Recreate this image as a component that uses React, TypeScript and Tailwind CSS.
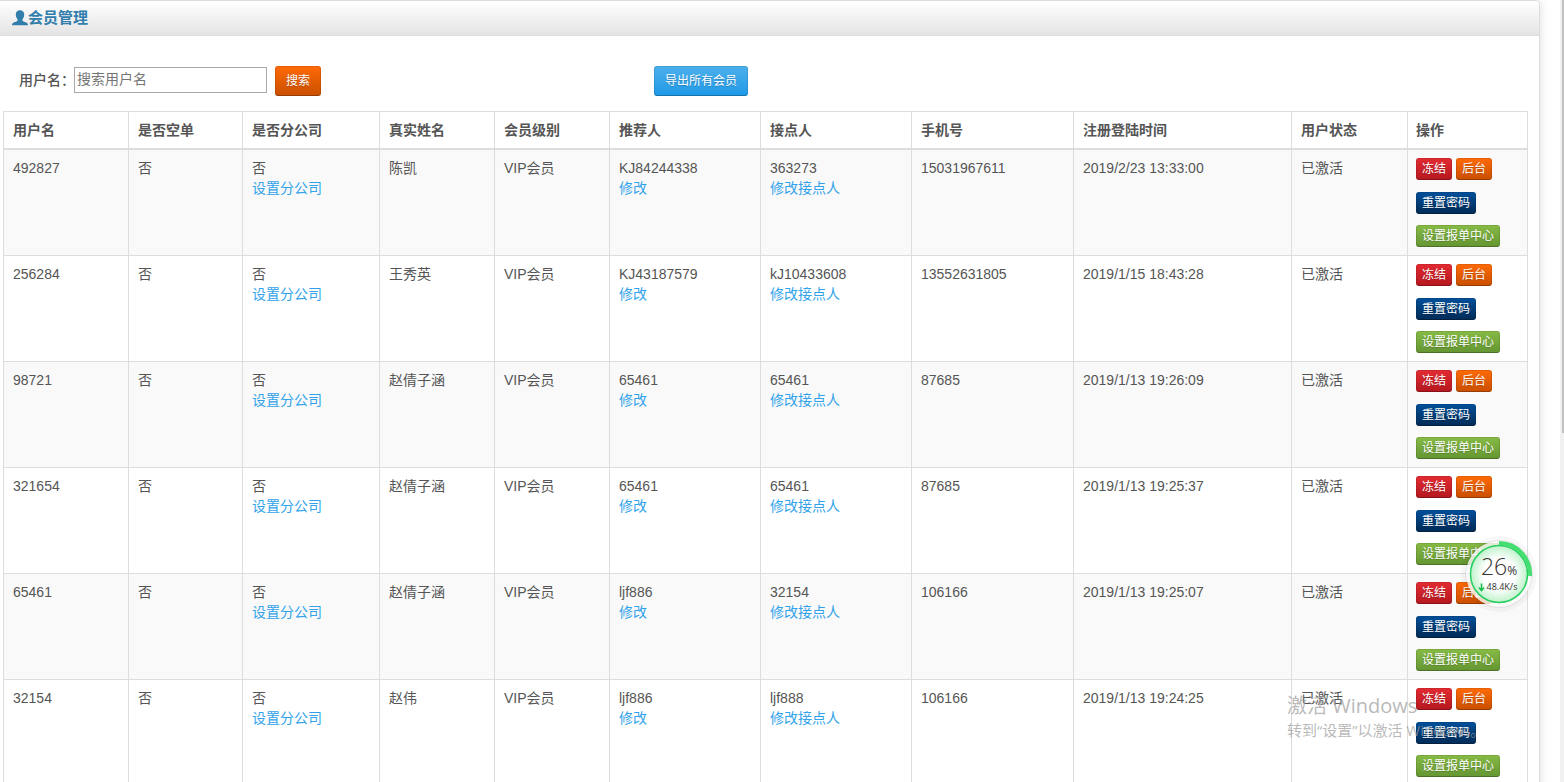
const members = [
  { id: "492827", name: "陈凯", referrer: "KJ84244338", node: "363273", phone: "15031967611", time: "2019/2/23 13:33:00" },
  { id: "256284", name: "王秀英", referrer: "KJ43187579", node: "kJ10433608", phone: "13552631805", time: "2019/1/15 18:43:28" },
  { id: "98721", name: "赵倩子涵", referrer: "65461", node: "65461", phone: "87685", time: "2019/1/13 19:26:09" },
  { id: "321654", name: "赵倩子涵", referrer: "65461", node: "65461", phone: "87685", time: "2019/1/13 19:25:37" },
  { id: "65461", name: "赵倩子涵", referrer: "ljf886", node: "32154", phone: "106166", time: "2019/1/13 19:25:07" },
  { id: "32154", name: "赵伟", referrer: "ljf886", node: "ljf888", phone: "106166", time: "2019/1/13 19:24:25" },
];

const columns = [
  { title: "用户名", width: "w-[125px]" },
  { title: "是否空单", width: "w-[114px]" },
  { title: "是否分公司", width: "w-[137px]" },
  { title: "真实姓名", width: "w-[115px]" },
  { title: "会员级别", width: "w-[115px]" },
  { title: "推荐人", width: "w-[151px]" },
  { title: "接点人", width: "w-[151px]" },
  { title: "手机号", width: "w-[162px]" },
  { title: "注册登陆时间", width: "w-[218px]" },
  { title: "用户状态", width: "w-[116px]" },
  { title: "操作", width: "w-[120px]" },
];

const frame = "border-b border-r border-[#ddd] py-2 pr-2 align-top";
const cell = `${frame} pl-[9px]`;
const button =
  "rounded-[3px] border border-black/10 border-b-black/25 bg-gradient-to-b bg-origin-border text-xs text-white [text-shadow:0_1px_1px_rgba(0,0,0,0.2)]";
const small = "h-[22px] px-[5px] leading-5";
const red = "from-[#e32b32] to-[#b5171f]";
const orange = "from-[#ff6a08] to-[#c94f00]";
const navy = "from-[#00509c] to-[#002b55]";
const green = "from-[#87bb45] to-[#649532]";
const blue = "from-[#4bb0ec] to-[#1b99e6]";

function TextLink({ children }: { children: string }) {
  return (
    <a href="#" className="block w-fit text-[#32a3ea]">
      {children}
    </a>
  );
}

function Toolbar() {
  return (
    <form className="flex h-[75px] items-start pl-[19px] pt-[30px]" onSubmit={(e) => e.preventDefault()}>
      <div className="flex w-[635px] items-start">
        <label htmlFor="username" className="w-[55px] whitespace-nowrap font-medium leading-7">
          用户名：
        </label>
        <input
          id="username"
          type="text"
          placeholder="搜索用户名"
          className="mt-px h-[26px] w-[193px] border border-[#a9a9a9] bg-white px-0.5 pb-0.5 placeholder:text-[#757575]"
        />
        <button type="submit" className={`${button} ${orange} ml-2 h-[30px] px-2.5`}>
          搜索
        </button>
      </div>
      <button type="button" className={`${button} ${blue} h-[30px] px-2.5`}>
        导出所有会员
      </button>
    </form>
  );
}

function MemberTable() {
  return (
    <table className="w-full table-fixed border-separate border-spacing-0 border-l border-t border-[#ddd]">
      <thead>
        <tr>
          {columns.map((c) => (
            <th
              key={c.title}
              scope="col"
              className={`${c.width} border-b-2 border-r border-[#ddd] py-2 pl-[9px] pr-2 text-left font-bold last:pl-2`}
            >
              {c.title}
            </th>
          ))}
        </tr>
      </thead>
      <tbody>
        {members.map((m) => (
          <tr key={m.id} className="h-[106px] odd:bg-[#f9f9f9]">
            <td className={cell}>{m.id}</td>
            <td className={cell}>否</td>
            <td className={cell}>
              否<TextLink>设置分公司</TextLink>
            </td>
            <td className={cell}>{m.name}</td>
            <td className={cell}>VIP会员</td>
            <td className={cell}>
              {m.referrer}
              <TextLink>修改</TextLink>
            </td>
            <td className={cell}>
              {m.node}
              <TextLink>修改接点人</TextLink>
            </td>
            <td className={cell}>{m.phone}</td>
            <td className={cell}>{m.time}</td>
            <td className={cell}>已激活</td>
            <td className={`${frame} pl-2`}>
              <div className="flex flex-col items-start gap-3">
                <div className="flex gap-1">
                  <button type="button" className={`${button} ${small} ${red}`}>冻结</button>
                  <button type="button" className={`${button} ${small} ${orange}`}>后台</button>
                </div>
                <button type="button" className={`${button} ${small} ${navy}`}>重置密码</button>
                <button type="button" className={`${button} ${small} ${green} -mt-px`}>设置报单中心</button>
              </div>
            </td>
          </tr>
        ))}
      </tbody>
    </table>
  );
}

function SpeedBall() {
  return (
    <div className="pointer-events-none absolute right-[25px] top-[534px] size-20">
      <svg viewBox="0 0 80 80" className="absolute inset-0 size-20" aria-hidden="true">
        <defs>
          <radialGradient id="ball">
            <stop offset="0.55" stopColor="#fff" />
            <stop offset="1" stopColor="#bff2cb" />
          </radialGradient>
        </defs>
        <circle cx="40" cy="40" r="38" fill="#000" fillOpacity="0.03" />
        <circle cx="40" cy="40" r="34" fill="#000" fillOpacity="0.07" />
        <circle cx="40" cy="40" r="33" fill="#fff" fillOpacity="0.8" />
        <circle cx="40" cy="40" r="28.5" fill="url(#ball)" stroke="#23cf5f" strokeWidth="1.5" />
        <path d="M40 9 A31 31 0 0 1 71 42" fill="none" stroke="#45de70" strokeWidth="4" />
        <path d="M22.500 49.500v7M20 53.500L22.500 56.500l2.500-3" fill="none" stroke="#16bd4b" strokeWidth="1.500" />
      </svg>
      <div className="relative flex flex-col items-center pt-5 font-['Open_Sans',sans-serif] text-[#333]">
        <div className="flex items-baseline font-light leading-6">
          <span className="text-[23px]">26</span>
          <span className="text-xs font-normal">%</span>
        </div>
        <div className="pl-1.5 text-[9px] font-medium leading-4">48.4K/s</div>
      </div>
    </div>
  );
}

function Watermark() {
  return (
    <div className="pointer-events-none absolute left-[1287px] top-[694px] whitespace-nowrap font-['Open_Sans','Noto_Sans_CJK_SC',sans-serif] text-[#9a9a9a]/70">
      <div className="text-xl leading-6">激活 Windows</div>
      <div className="text-[15px] leading-6">转到“设置”以激活 Windows。</div>
    </div>
  );
}

export default function App() {
  return (
    <div className="relative flex h-screen overflow-hidden bg-white font-['Liberation_Sans','Noto_Sans_CJK_SC',sans-serif] text-sm leading-5 text-[#555]">
      <main className="mr-5 flex-1 self-start rounded-tr-[5px] border-r border-t border-[#ddd] pb-10 shadow-[0_0_10px_#ddd]">
        <header className="flex h-[35px] items-center rounded-tr border-b border-[#ddd] bg-gradient-to-b from-white to-[#e4e4e4] pl-3 text-[#317eac]">
          <svg viewBox="0 0 16 16" className="size-4" fill="currentColor" aria-hidden="true">
            <path d="M8 .3c2.700 0 4.200 1.700 4.200 4.200 0 2-.8 3.700-1.700 4.800v1.500c0 .7 4.500 1.600 5.200 3 .2.400.3.900.3 1.400H0c0-.5.1-1 .3-1.400.7-1.400 5.200-2.300 5.200-3V9.300C4.600 8.200 3.800 6.500 3.800 4.500 3.800 2 5.300.3 8 .3z" />
          </svg>
          <h2 className="text-[15px] font-bold">会员管理</h2>
        </header>
        <Toolbar />
        <div className="pl-[3px] pr-[11px]">
          <MemberTable />
        </div>
      </main>
      <div className="flex w-1 justify-end bg-[#f1f1f1]" aria-hidden="true">
        <div className="h-[433px] w-0.5 bg-[#c1c1c1]" />
      </div>
      <SpeedBall />
      <Watermark />
    </div>
  );
}
